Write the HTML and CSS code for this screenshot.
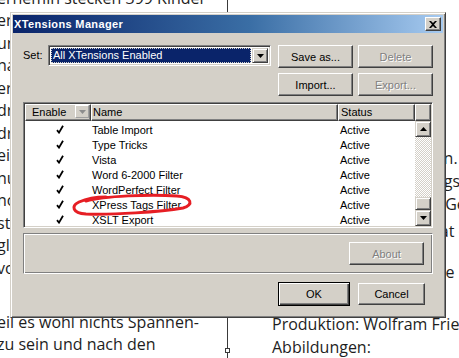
FILE: index.html
```html
<!DOCTYPE html>
<html lang="de">
<head>
<meta charset="utf-8">
<title>XTensions Manager</title>
<link rel="stylesheet" href="styles.css">
</head>
<body>
<div class="page">
  <div class="col col-left">
    <div class="ln">ernemin stecken 399 Kinder</div>
    <div class="ln">erzieherinnen betreut, die</div>
    <div class="ln">und Kinderpflegerinnen, die</div>
    <div class="ln">nach einem festen Plan den</div>
    <div class="ln">ereignisreichen Tag gestalten.</div>
    <div class="ln">drinnen wird gesungen und</div>
    <div class="ln">draußen im Garten gespielt,</div>
    <div class="ln">einmal in der Woche wird</div>
    <div class="ln">nun mit den Kleinen geturnt</div>
    <div class="ln">noch vor dem Mittagessen,</div>
    <div class="ln">stets eine kleine Ruhezeit,</div>
    <div class="ln">gleich danach das Mittag-</div>
    <div class="ln">vom Koch, der täglich kommt.</div>
    <div class="ln gap"></div>
    <div class="ln">eil es wohl nichts Spannen-</div>
    <div class="ln">zu sein und nach den</div>
  </div>
  <div class="rule"><span class="handle"></span></div>
  <div class="col col-right">
    <div class="rl">Vorwort</div>
    <div class="rl">Liebe Eltern,</div>
    <div class="rl">herzlich willkommen</div>
    <div class="rl">in unserem Haus.</div>
    <div class="rl">Die Leiterin ist Frau Jahn.</div>
    <div class="rl">Ein Kindergarten hat tagsüber</div>
    <div class="rl">Im Sommer stehen die Gebäude</div>
    <div class="rl r-at">Darauf lädt der Elternrat ein.</div>
    <div class="rl">Dazu kommen</div>
    <div class="rl r-se">Notieren Sie die Adresse</div>
    <div class="rl">im Anhang.</div>
    <div class="rl r-prod">Produktion: Wolfram Friedrich</div>
    <div class="rl">Abbildungen:</div>
  </div>
</div>

<div class="dialog">
  <div class="titlebar">
    <span class="title">XTensions Manager</span>
    <button class="tb-close" aria-label="Schließen">
      <svg width="8" height="7" viewBox="0 0 8 7"><path d="M0 0h2l2 2 2-2h2L5 3.5 8 7H6L4 5 2 7H0l3-3.5z" fill="#000"/></svg>
    </button>
  </div>
  <div class="body">
    <div class="topgrid">
      <span class="label">Set:</span>
      <div class="select">
        <span class="select-value"><span class="focus">All XTensions Enabled</span></span>
        <span class="select-btn"><svg width="7" height="4" viewBox="0 0 7 4"><path d="M0 0h7L3.5 4z" fill="#000"/></svg></span>
      </div>
      <span></span>
      <button class="btn">Save as...</button>
      <button class="btn btn-right" disabled>Delete</button>
      <span></span><span></span><span></span>
      <button class="btn">Import...</button>
      <button class="btn btn-right" disabled>Export...</button>
    </div>

    <div class="list">
      <div class="list-head">
        <div class="hcell h-enable">Enable<span class="h-drop"><svg width="7" height="4" viewBox="0 0 7 4"><path d="M0 0h7L3.5 4z" fill="#8d8d8d"/></svg></span></div>
        <div class="hcell h-name">Name</div>
        <div class="hcell h-status">Status</div>
        <div class="hcell h-fill"></div>
      </div>
      <div class="list-body">
        <div class="rows">
          <div class="row"><span class="c-en"><svg class="chk" width="8" height="9" viewBox="0 0 8 9"><path d="M1 5.2 3 7.6 7 0.8" fill="none" stroke="#000" stroke-width="1.8"/></svg></span><span class="c-name">Table Import</span><span class="c-st">Active</span></div>
          <div class="row"><span class="c-en"><svg class="chk" width="8" height="9" viewBox="0 0 8 9"><path d="M1 5.2 3 7.6 7 0.8" fill="none" stroke="#000" stroke-width="1.8"/></svg></span><span class="c-name">Type Tricks</span><span class="c-st">Active</span></div>
          <div class="row"><span class="c-en"><svg class="chk" width="8" height="9" viewBox="0 0 8 9"><path d="M1 5.2 3 7.6 7 0.8" fill="none" stroke="#000" stroke-width="1.8"/></svg></span><span class="c-name">Vista</span><span class="c-st">Active</span></div>
          <div class="row"><span class="c-en"><svg class="chk" width="8" height="9" viewBox="0 0 8 9"><path d="M1 5.2 3 7.6 7 0.8" fill="none" stroke="#000" stroke-width="1.8"/></svg></span><span class="c-name">Word 6-2000 Filter</span><span class="c-st">Active</span></div>
          <div class="row"><span class="c-en"><svg class="chk" width="8" height="9" viewBox="0 0 8 9"><path d="M1 5.2 3 7.6 7 0.8" fill="none" stroke="#000" stroke-width="1.8"/></svg></span><span class="c-name">WordPerfect Filter</span><span class="c-st">Active</span></div>
          <div class="row"><span class="c-en"><svg class="chk" width="8" height="9" viewBox="0 0 8 9"><path d="M1 5.2 3 7.6 7 0.8" fill="none" stroke="#000" stroke-width="1.8"/></svg></span><span class="c-name">XPress Tags Filter</span><span class="c-st">Active</span></div>
          <div class="row"><span class="c-en"><svg class="chk" width="8" height="9" viewBox="0 0 8 9"><path d="M1 5.2 3 7.6 7 0.8" fill="none" stroke="#000" stroke-width="1.8"/></svg></span><span class="c-name">XSLT Export</span><span class="c-st">Active</span></div>
        </div>
        <div class="vscroll">
          <span class="sb-btn"><svg width="7" height="4" viewBox="0 0 7 4"><path d="M3.5 0 7 4H0z" fill="#000"/></svg></span>
          <span class="sb-track"></span>
          <span class="sb-thumb"></span>
          <span class="sb-btn"><svg width="7" height="4" viewBox="0 0 7 4"><path d="M0 0h7L3.5 4z" fill="#000"/></svg></span>
        </div>
      </div>
    </div>

    <div class="group">
      <button class="btn" disabled>About</button>
    </div>

    <div class="footer">
      <button class="btn btn-default">OK</button>
      <button class="btn btn-cancel">Cancel</button>
    </div>
  </div>
</div>

<svg class="mark" width="459" height="358" viewBox="0 0 459 358">
  <path d="M86 201 C104 196 150 194 177 196 C192 197 194 205 183 208 C160 212 112 215 86 214 C72 213 71 206 79 202 C88 198 97 197 106 197" fill="none" stroke="#e61e24" stroke-width="3" stroke-linecap="round"/>
</svg>
</body>
</html>
```

FILE: styles.css
```css
* { box-sizing: border-box; }

html, body {
  margin: 0;
  padding: 0;
}

body {
  width: 459px;
  height: 358px;
  overflow: hidden;
  background: #ffffff;
  position: relative;
  font-family: "Open Sans", "Noto Sans", sans-serif;
  color: #1e1e1e;
}

/* ---------- background document ---------- */
.page {
  display: grid;
  grid-template-columns: 227px 1px 1fr;
  height: 358px;
}

.col {
  font-size: 16px;
  white-space: nowrap;
}

.ln {
  height: 22.5px;
  line-height: 22.5px;
}

.ln.gap { height: 31.5px; }

.col-left {
  margin-left: -3px;
  margin-top: -13.5px;
}

.col-right {
  padding-left: 44px;
  padding-top: 55px;
  overflow: hidden;
}

.rl {
  height: 23px;
  line-height: 23px;
}

.rl.r-at { margin-top: 4px; }
.rl.r-se { margin-top: -5px; }
.rl.r-prod { margin-top: 6px; }

.rule {
  background: #3a3a3a;
  position: relative;
}

.handle {
  position: absolute;
  left: -2px;
  top: 348px;
  width: 5px;
  height: 5px;
  border: 1px solid #3a3a3a;
  background: #fff;
}

/* ---------- dialog ---------- */
.dialog {
  position: absolute;
  left: 10px;
  top: 12px;
  width: 436px;
  height: 306px;
  background: #d4d0c8;
  border: 1px solid;
  border-color: #d4d0c8 #404040 #404040 #d4d0c8;
  box-shadow: inset 1px 1px 0 #ffffff, inset -1px -1px 0 #808080;
  padding: 2px;
  font-family: "Liberation Sans", Arial, sans-serif;
  font-size: 11px;
  color: #000;
}

.titlebar {
  height: 18px;
  background: linear-gradient(to right, #0a246a 0%, #3a6ea5 55%, #a6caf0 100%);
  display: flex;
  align-items: center;
  padding-left: 1px;
  padding-right: 2px;
}

.title {
  flex: 1;
  color: #fff;
  font-weight: bold;
  font-size: 11px;
  letter-spacing: 0.35px;
}

.tb-close {
  width: 16px;
  height: 14px;
  padding: 0;
  margin: 0;
  background: #d4d0c8;
  border: 1px solid;
  border-color: #fff #404040 #404040 #fff;
  box-shadow: inset -1px -1px 0 #808080;
  display: flex;
  align-items: center;
  justify-content: center;
}

.body {
  padding: 12px 10px 0 10px;
}

.topgrid {
  display: grid;
  grid-template-columns: 25px 223px 7px 75px 80px;
  grid-template-rows: 23px 23px;
  row-gap: 5px;
}

.btn-right { margin-left: 5px; }

.label {
  line-height: 21px;
}

.select {
  height: 21px;
  display: flex;
  background: #fff;
  border: 1px solid;
  border-color: #808080 #fff #fff #808080;
  box-shadow: inset 1px 1px 0 #404040, inset -1px -1px 0 #d4d0c8;
  padding: 2px;
}

.select-value {
  flex: 1;
  background: #0a246a;
  color: #fff;
  display: flex;
  align-items: center;
  padding: 0 1px;
}

.focus {
  flex: 1;
  line-height: 13px;
  outline: 1px dotted #d4d0c8;
  padding-left: 1px;
}

.select-btn {
  width: 16px;
  margin-left: 1px;
  background: #d4d0c8;
  border: 1px solid;
  border-color: #d4d0c8 #404040 #404040 #d4d0c8;
  box-shadow: inset 1px 1px 0 #fff, inset -1px -1px 0 #808080;
  display: flex;
  align-items: center;
  justify-content: center;
}

.btn {
  height: 23px;
  width: 75px;
  padding: 0;
  font: inherit;
  color: #000;
  background: #d4d0c8;
  border: 1px solid;
  border-color: #fff #404040 #404040 #fff;
  box-shadow: inset -1px -1px 0 #808080, inset 1px 1px 0 #d4d0c8;
}

.btn:disabled {
  color: #808080;
  text-shadow: 1px 1px 0 #fff;
}

/* list view */
.list {
  margin-top: 6px;
  height: 126px;
  background: #fff;
  border: 1px solid;
  border-color: #808080 #fff #fff #808080;
  box-shadow: inset 1px 1px 0 #404040, inset -1px -1px 0 #d4d0c8;
  padding: 1px;
  display: flex;
  flex-direction: column;
}

.list-head {
  height: 17px;
  display: flex;
  flex: none;
}

.hcell {
  height: 17px;
  background: #d4d0c8;
  border: 1px solid;
  border-color: #fff #404040 #404040 #fff;
  box-shadow: inset -1px -1px 0 #808080;
  line-height: 14px;
  padding-left: 1px;
  white-space: nowrap;
}

.h-enable {
  width: 66px;
  display: flex;
  padding-left: 6px;
  padding-right: 1px;
}

.h-drop {
  margin-left: auto;
  width: 14px;
  height: 13px;
  border: 1px solid;
  border-color: #fff #a0a0a0 #a0a0a0 #fff;
  display: flex;
  align-items: center;
  justify-content: center;
}

.h-name { width: 247px; }
.h-status { width: 77px; padding-left: 2px; }
.h-fill { flex: 1; }

.list-body {
  flex: 1;
  display: flex;
  min-height: 0;
}

.rows {
  flex: 1;
  padding-top: 1px;
}

.row {
  height: 15px;
  display: flex;
  align-items: center;
  white-space: nowrap;
}

.c-en {
  width: 66px;
  display: flex;
  justify-content: center;
  padding-left: 3px;
}

.c-name { width: 248px; padding-left: 1px; }
.c-st { padding-left: 1px; }

.vscroll {
  width: 16px;
  display: flex;
  flex-direction: column;
}

.sb-btn,
.sb-thumb {
  background: #d4d0c8;
  border: 1px solid;
  border-color: #d4d0c8 #404040 #404040 #d4d0c8;
  box-shadow: inset 1px 1px 0 #fff, inset -1px -1px 0 #808080;
  display: flex;
  align-items: center;
  justify-content: center;
  flex: none;
}

.sb-btn { height: 16px; }
.sb-thumb { height: 13px; }

.sb-track {
  flex: 1;
  background-color: #fff;
  background-image: conic-gradient(#d4d0c8 25%, #fff 0 50%, #d4d0c8 0 75%, #fff 0);
  background-size: 2px 2px;
}

/* group box */
.group {
  margin-top: 5px;
  height: 41px;
  border: 1px solid;
  border-color: #808080 #fff #fff #808080;
  box-shadow: inset 1px 1px 0 #fff, inset -1px -1px 0 #808080;
  display: flex;
  justify-content: flex-end;
  align-items: flex-start;
  padding: 8px 8px 0 0;
}

.footer {
  margin-top: 8px;
  display: flex;
  gap: 8px;
  padding-left: 255px;
}

.btn-default {
  width: 72px;
  height: 24px;
  border: 1px solid #000;
  box-shadow: inset 1px 1px 0 #fff, inset -1px -1px 0 #404040, inset -2px -2px 0 #808080;
}

.btn-cancel {
  width: 67px;
  margin-top: 1px;
  height: 22px;
}

.mark {
  position: absolute;
  left: 0;
  top: 0;
  pointer-events: none;
}
```
